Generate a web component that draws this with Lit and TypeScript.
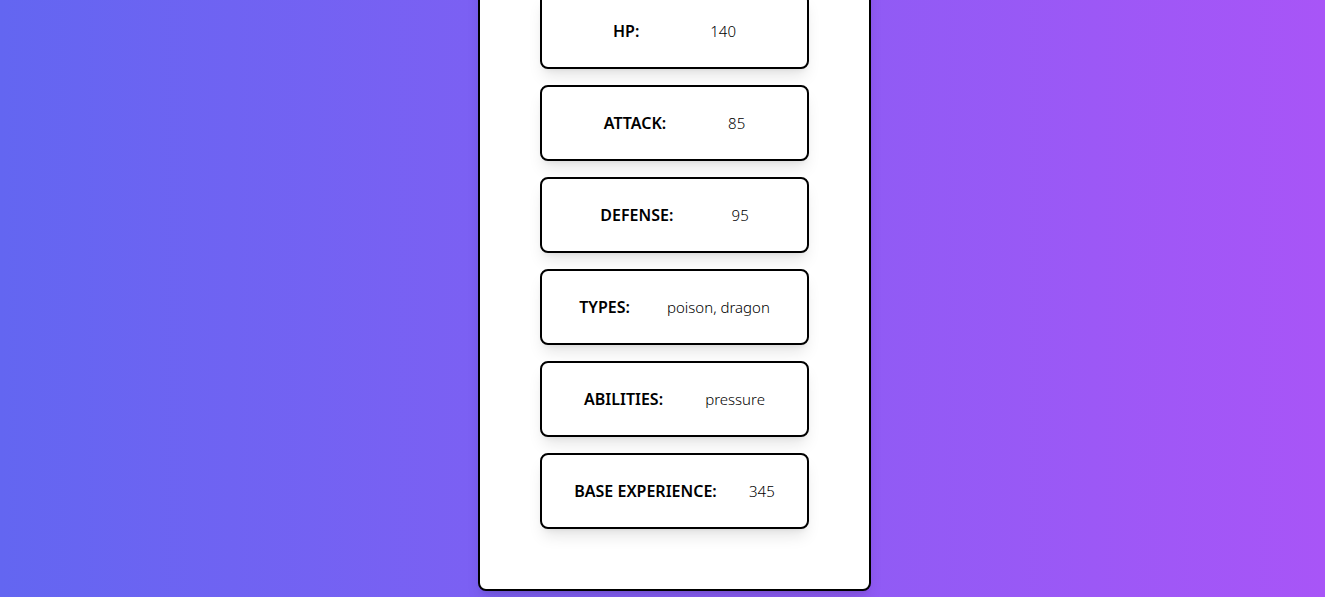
import { LitElement, html, css } from "lit";
import { customElement, property } from "lit/decorators.js";

interface Stat {
  label: string;
  value: string;
}

@customElement("stat-list")
class StatList extends LitElement {
  @property({ attribute: false }) stats: Stat[] = [];

  static styles = css`
    :host {
      display: block;
    }
    .list {
      display: grid;
      gap: 16px;
      margin: 0;
    }
    .row {
      display: flex;
      align-items: baseline;
      justify-content: space-evenly;
      padding: 24px 0;
      border: 2px solid #000;
      border-radius: 8px;
      background: #fff;
      box-shadow:
        0 10px 15px -3px rgb(0 0 0 / 0.1),
        0 4px 6px -4px rgb(0 0 0 / 0.1);
      line-height: 24px;
    }
    .label {
      font-size: 16px;
      font-weight: 600;
      text-transform: uppercase;
    }
    .value {
      margin: 0;
      font-size: 15px;
      font-weight: 350;
    }
  `;

  render() {
    return html`
      <dl class="list">
        ${this.stats.map(
          (stat) => html`
            <div class="row">
              <dt class="label">${stat.label}:</dt>
              <dd class="value">${stat.value}</dd>
            </div>
          `
        )}
      </dl>
    `;
  }
}

@customElement("app-root")
class AppRoot extends LitElement {
  private stats: Stat[] = [
    { label: "hp", value: "140" },
    { label: "attack", value: "85" },
    { label: "defense", value: "95" },
    { label: "types", value: "poison, dragon" },
    { label: "abilities", value: "pressure" },
    { label: "base experience", value: "345" },
  ];

  static styles = css`
    :host {
      display: block;
      color: #000;
      font-family: "Segoe UI", "Noto Sans", "Open Sans", sans-serif;
    }
    .page {
      box-sizing: border-box;
      display: flex;
      flex-direction: column;
      align-items: center;
      justify-content: flex-end;
      height: 100vh;
      padding: 0 0 6px 24px;
      overflow: hidden;
      background: linear-gradient(to right, #6366f1, #a855f7);
    }
    .card {
      box-sizing: border-box;
      flex: none;
      width: 100%;
      max-width: 393px;
      padding: 60px;
      border: 2px solid #000;
      border-radius: 8px;
      background: #fff;
      box-shadow:
        0 10px 15px -3px rgb(0 0 0 / 0.1),
        0 4px 6px -4px rgb(0 0 0 / 0.1);
    }
  `;

  render() {
    return html`
      <main class="page">
        <article class="card">
          <stat-list .stats=${this.stats}></stat-list>
        </article>
      </main>
    `;
  }
}
